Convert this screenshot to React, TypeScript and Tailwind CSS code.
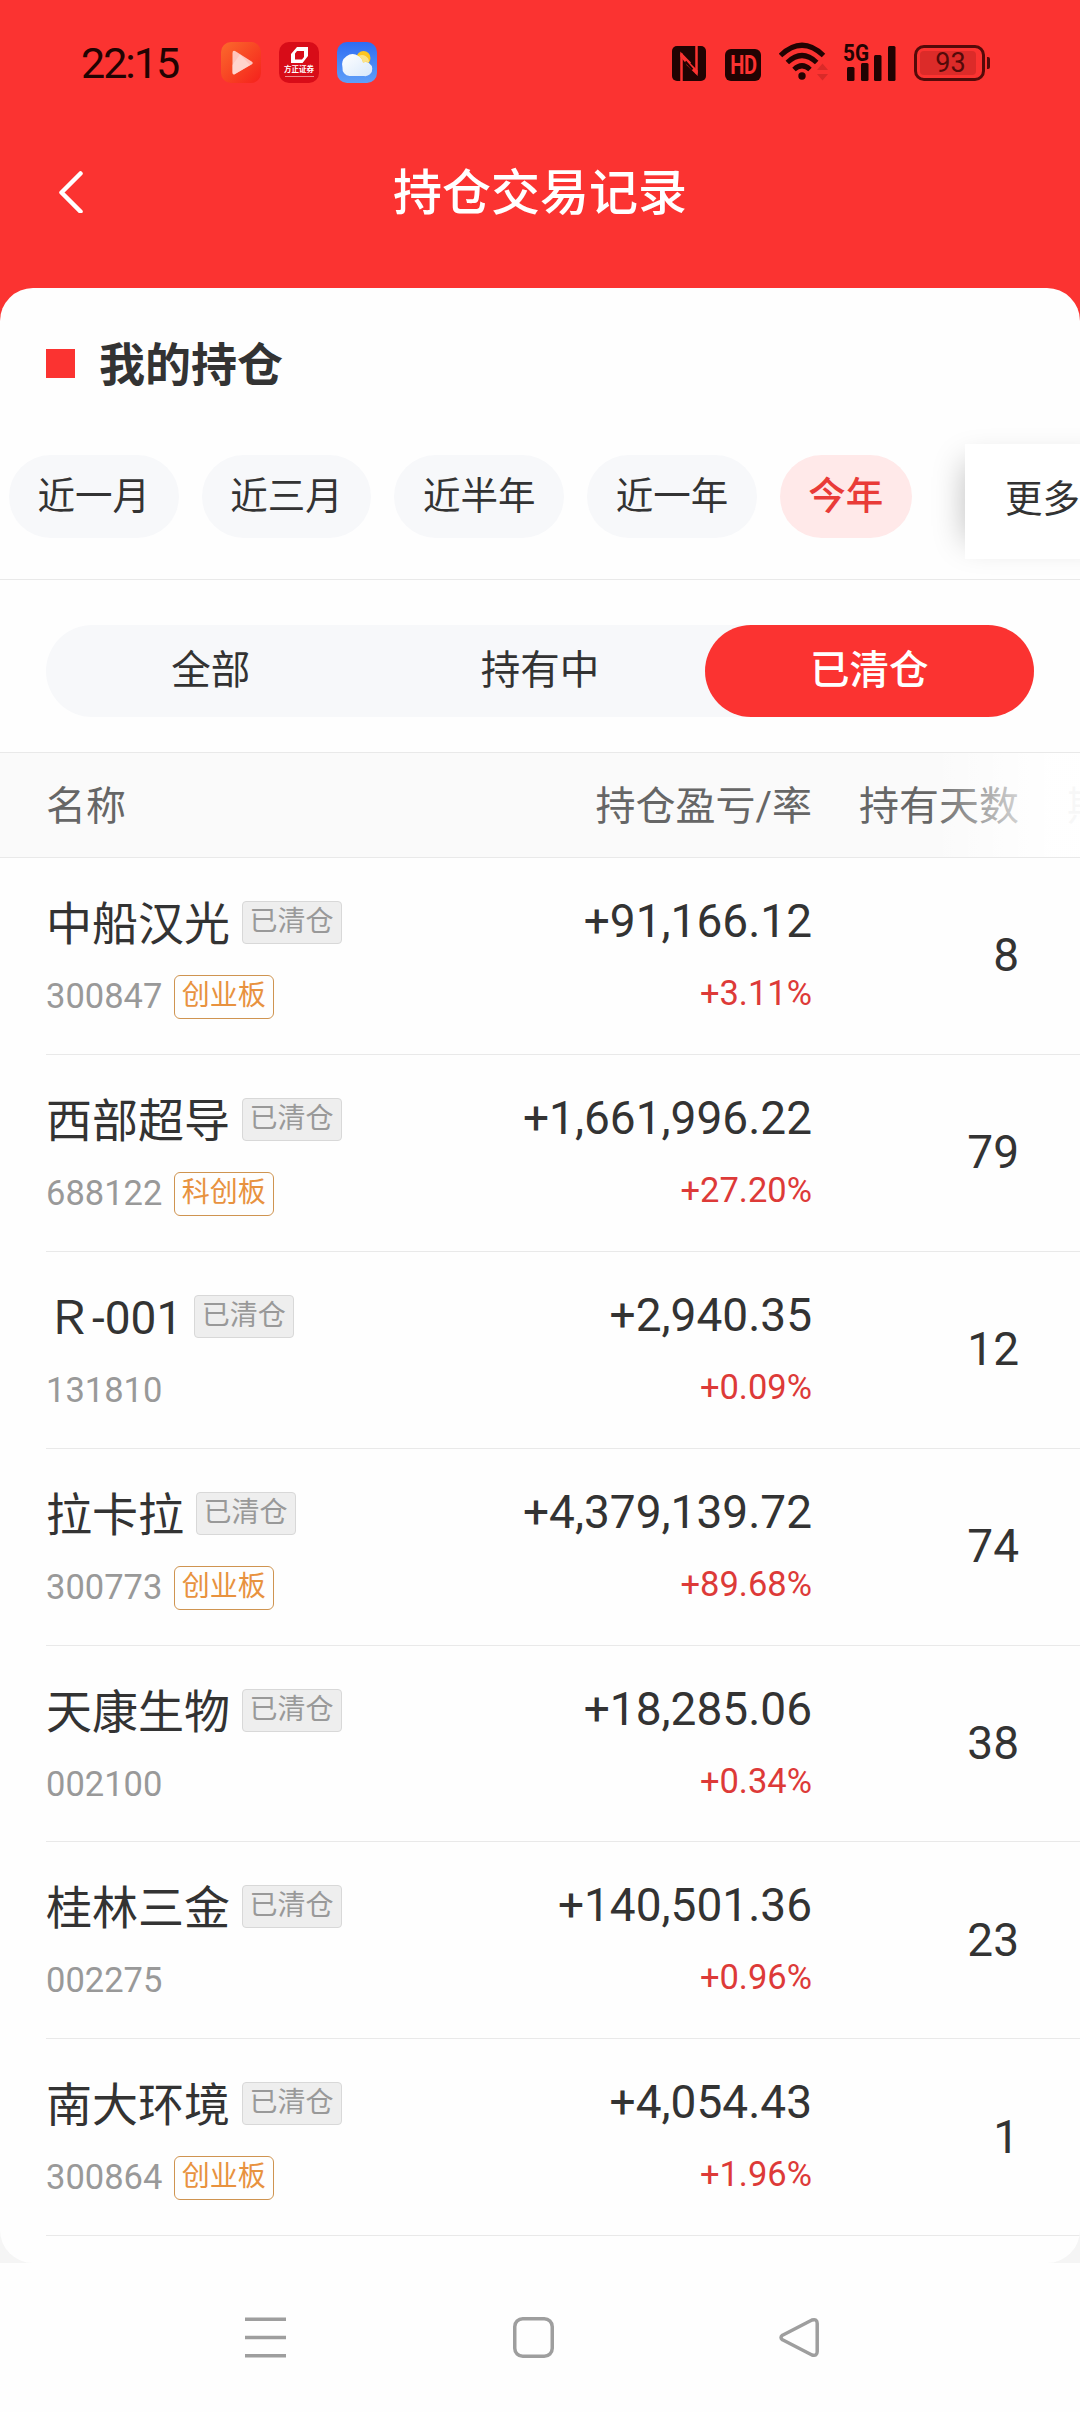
import React from 'react';

interface Holding {
  name: string;
  code: string;
  board?: string;
  profit: string;
  rate: string;
  days: number;
}

const holdings: Holding[] = [
  { name: '中船汉光', code: '300847', board: '创业板', profit: '+91,166.12', rate: '+3.11%', days: 8 },
  { name: '西部超导', code: '688122', board: '科创板', profit: '+1,661,996.22', rate: '+27.20%', days: 79 },
  { name: 'Ｒ-001', code: '131810', profit: '+2,940.35', rate: '+0.09%', days: 12 },
  { name: '拉卡拉', code: '300773', board: '创业板', profit: '+4,379,139.72', rate: '+89.68%', days: 74 },
  { name: '天康生物', code: '002100', profit: '+18,285.06', rate: '+0.34%', days: 38 },
  { name: '桂林三金', code: '002275', profit: '+140,501.36', rate: '+0.96%', days: 23 },
  { name: '南大环境', code: '300864', board: '创业板', profit: '+4,054.43', rate: '+1.96%', days: 1 },
];

const periods = ['近一月', '近三月', '近半年', '近一年', '今年'];
const tabs = ['全部', '持有中', '已清仓'];

const PlayIcon = () => (
  <svg className="w-10 h-[41px]" viewBox="0 0 40 41">
    <defs>
      <linearGradient id="play" x1="0" y1="0" x2="1" y2="1">
        <stop offset="0" stopColor="#fb6a2c" />
        <stop offset="1" stopColor="#f5201c" />
      </linearGradient>
    </defs>
    <rect width="40" height="41" rx="10" fill="url(#play)" />
    <path d="M11.5 11v19.5q0 3 2.6 1.500L31 22.300q1.800-1.300 0-2.600L14.500 9.200q-3-1.200-3 1.800z" fill="#ffc5bd" />
    <path d="M11.500 23l7.500-10.500L29 23 14 32q-2.500 1-2.500-2z" fill="#ffdcd6" opacity=".7" />
  </svg>
);

const BrokerIcon = () => (
  <div className="w-10 h-[41px] rounded-[10px] bg-[#d80c18] flex flex-col items-center pt-[5px]">
    <svg className="w-[17px] h-4 shrink-0" viewBox="0 0 17 16">
      <path fillRule="evenodd" fill="#fff" d="M6 0h11v9l-5.500 7H0V7zM6 4L4 6.500v6h7L13 10V4z" />
    </svg>
    <span className="text-[7.5px] leading-[8px] font-bold text-white mt-[3px] whitespace-nowrap">方正证券</span>
    <div className="w-[29px] h-px bg-[#ee8a8e] mt-[2px]" />
  </div>
);

const WeatherIcon = () => (
  <svg className="w-10 h-[41px]" viewBox="0 0 40 41">
    <defs>
      <linearGradient id="sky" x1="0" y1="0" x2="0" y2="1">
        <stop offset="0" stopColor="#2f6cf3" />
        <stop offset="1" stopColor="#5f9ff8" />
      </linearGradient>
      <linearGradient id="cloud" x1="0" y1="0" x2="1" y2="1">
        <stop offset="0" stopColor="#ffffff" />
        <stop offset="1" stopColor="#d8e8fb" />
      </linearGradient>
    </defs>
    <rect width="40" height="41" rx="10" fill="url(#sky)" />
    <circle cx="26.500" cy="16" r="7" fill="#fdc51f" />
    <path d="M12.500 34a7.500 7.500 0 0 1-7-8.500 10.500 10.500 0 0 1 16-11.500 9 9 0 0 1 4.500 6.500A7 7 0 1 1 27 34z" fill="url(#cloud)" />
    <path d="M21.500 14a9 9 0 0 1 4.500 6.500 7 7 0 0 1 6-.3 7 7 0 0 0-10.500-6.200z" fill="#fbe388" />
  </svg>
);

const NfcIcon = () => (
  <svg className="w-[34px] h-[35px]" viewBox="0 0 34 35">
    <rect width="34" height="35" rx="5" fill="#210302" />
    <path d="M9.500 35V7.500M24.500 27.500V0" fill="none" stroke="#fb3331" strokeWidth="2.500" />
    <path d="M8.300 5.500L19 16.500l-2.500 4L8.300 10.500z M25.700 30L14.500 19v-5.500L25.700 24.500z" fill="#fb3331" />
    <path d="M13.500 15.500l7 8" stroke="#210302" strokeWidth="2" />
  </svg>
);

const HdIcon = () => (
  <div className="w-9 h-8 rounded-[6px] bg-[#210302] flex items-center justify-center">
    <span className="text-[25px] leading-none font-bold text-[#fb3331] tracking-[-0.5px] scale-x-[0.8]">HD</span>
  </div>
);

const WifiIcon = () => (
  <svg className="w-[50px] h-[39px]" viewBox="0 0 50 39" fill="none">
    <g stroke="#210302" strokeWidth="5">
      <path d="M1.500 13.500Q23 -7 44.500 13.500" />
      <path d="M8.300 20.500Q23 6.500 37.700 20.500" />
      <path d="M15 27.500Q23 20 31 27.500" />
    </g>
    <circle cx="23" cy="34" r="3.700" fill="#210302" />
    <path d="M38 28l5.500-6.500L49 28zM38 32h11l-5.500 6.500z" fill="#d92a28" />
  </svg>
);

const SignalIcon = () => (
  <svg className="w-[53px] h-[38px] overflow-visible" viewBox="0 0 53 38" fill="#210302">
    <text x="-1" y="17.500" textLength="26" lengthAdjust="spacingAndGlyphs" className="text-[24px] font-bold">5G</text>
    <rect x="3" y="24" width="7.500" height="14" rx="1.500" />
    <rect x="17" y="20" width="7.500" height="18" rx="1.500" />
    <rect x="30" y="12" width="7.500" height="26" rx="1.500" />
    <rect x="44" y="3" width="7.500" height="35" rx="1.500" />
  </svg>
);

const BatteryIcon = () => (
  <div className="flex items-center gap-[2px]">
    <div className="w-[71px] h-9 rounded-[10px] border-[3px] border-[#540a09] p-[3px]">
      <div className="w-[56px] h-full rounded-[4px] bg-[#dc2b29] flex items-center justify-center pl-[5px]">
        <span className="text-[27px] leading-none text-[#540a09]">93</span>
      </div>
    </div>
    <div className="w-[3px] h-3 rounded-r-[2px] bg-[#540a09]" />
  </div>
);

const StatusBar = () => (
  <div className="h-[125px] flex items-center pl-[81px] pr-[90px]">
    <span className="w-[139px] pt-px text-[43px] leading-none tracking-[-2px] text-[#210302]">22:15</span>
    <div className="flex items-center gap-[18px] pb-px ml-px">
      <PlayIcon />
      <BrokerIcon />
      <WeatherIcon />
    </div>
    <div className="ml-auto flex items-end pb-[2px]">
      <NfcIcon />
      <div className="ml-[19px]"><HdIcon /></div>
      <div className="ml-[18px]"><WifiIcon /></div>
      <div className="ml-[15px]"><SignalIcon /></div>
      <div className="ml-[17px]"><BatteryIcon /></div>
    </div>
  </div>
);

const HoldingRow = ({ item }: { item: Holding }) => (
  <div className="ml-[46px] h-[196.9px] flex border-b border-[#e9e9e9] text-[#333333]">
    <div className="flex-1 pt-[38px]">
      <div className="flex items-center h-[56px]">
        <span className="text-[46px] leading-[56px] whitespace-nowrap">{item.name}</span>
        <span className="ml-[12px] mb-[3px] w-[100px] h-[43px] rounded-[4px] border border-[#d8d8d8] bg-[#eeeeee] flex justify-center pr-px text-[28px] leading-[39px] text-[#999999]">
          已清仓
        </span>
      </div>
      <div className="flex items-center h-[44px] mt-[22px]">
        <span className="text-[34.5px] leading-[44px] text-[#999999]">{item.code}</span>
        {item.board && (
          <span className="relative top-px ml-[12px] w-[100px] h-[44px] rounded-[6px] border border-[#cf9450] flex justify-center pr-px text-[28px] leading-[40px] text-[#e8923f]">
            {item.board}
          </span>
        )}
      </div>
    </div>
    <div className="w-[320px] pt-[36px] text-right">
      <div className="text-[46px] leading-[54px]">{item.profit}</div>
      <div className="text-[34.5px] leading-[40px] mt-[25px] text-[#dd3a38]">{item.rate}</div>
    </div>
    <div className="w-[268px] pr-[61px] flex items-center justify-end text-[46px]">{item.days}</div>
  </div>
);

const App: React.FC = () => {
  const activePeriod = '今年';
  const activeTab = '已清仓';

  return (
    <div
      lang="zh-CN"
      className="w-[1080px] h-[2412px] overflow-hidden flex flex-col bg-[#fefefe] font-['Roboto','Noto_Sans_CJK_SC',sans-serif]"
    >
      {/* Red header */}
      <header className="h-[322px] shrink-0 bg-[#fb3331]">
        <StatusBar />
        <div className="h-[134px] grid grid-cols-[1fr_auto_1fr] items-center">
          <svg className="ml-[58px] w-[26px] h-[42px]" viewBox="0 0 26 42" fill="none" stroke="#fff" strokeWidth="4.500" strokeLinecap="round" strokeLinejoin="round">
            <path d="M22.500 2.500L3.500 21.500l19 19" />
          </svg>
          <h1 className="pt-[2px] text-[49px] leading-none font-medium text-white">持仓交易记录</h1>
        </div>
      </header>

      <div className="h-[1975px] -mt-[34px] shrink-0 bg-[linear-gradient(#fb3331_50%,#f5f5f5_50%)]">
        <main className="h-full rounded-[33px] bg-[#fefefe] overflow-hidden">
          <div className="flex items-center h-[154px] pl-[46px] gap-[24px]">
            <div className="w-[29px] h-[29px] bg-[#fb3331] mb-[3px]" />
            <h2 className="text-[46px] leading-none font-bold text-[#333333]">我的持仓</h2>
          </div>

          {/* Period filter */}
          <div className="flex h-[138px] border-b border-[#e9e9e9]">
            <div className="w-[965px] shrink-0 flex gap-[23px] pl-[9px] pt-[13px]">
              {periods.map((p) => (
                <button
                  key={p}
                  className={`h-[83px] px-[28.6px] rounded-[42px] shrink-0 text-[37.5px] leading-none ${
                    p === activePeriod ? 'bg-[#ffe9e9] text-[#e93b38] font-medium' : 'bg-[#f7f8fa] text-[#333333]'
                  }`}
                >
                  {p}
                </button>
              ))}
            </div>
            <div className="w-[180px] h-[115px] mt-[2px] shrink-0 bg-white shadow-[-18px_0_32px_-18px_rgba(0,0,0,0.26)] flex items-center pl-[40px] pb-[3px] text-[37.5px] leading-none text-[#333333] whitespace-nowrap">
              更多
            </div>
          </div>

          {/* Status tabs */}
          <div className="h-[172px] pt-[45px] px-[46px]">
            <div className="h-[92px] rounded-full bg-[#f7f8fa] flex">
              {tabs.map((t) => (
                <button
                  key={t}
                  className={`flex-1 rounded-full text-[39.5px] leading-none ${
                    t === activeTab ? 'bg-[#fb3331] text-white font-medium' : 'text-[#333333]'
                  }`}
                >
                  {t}
                </button>
              ))}
            </div>
          </div>

          <div className="relative h-[106px] border-y border-[#e9e9e9] bg-[#fafafa] flex items-center pl-[46px] pt-[4px] text-[40px] leading-none text-[#666666] whitespace-nowrap overflow-hidden">
            <span className="flex-1">名称</span>
            <span className="w-[320px] text-right">持仓盈亏/率</span>
            <span className="w-[207px] text-right">持有天数</span>
            <span className="w-[61px] pl-[48px]">期</span>
            <div className="absolute inset-y-0 right-0 w-[150px] bg-linear-to-r from-white/0 to-white/95 to-80%" />
          </div>

          {holdings.map((item) => (
            <HoldingRow key={item.code} item={item} />
          ))}
        </main>
      </div>

      {/* System navigation */}
      <nav className="flex-1 flex items-start pt-[53px]">
        <svg className="ml-[244px] w-[43px] h-[43px]" viewBox="0 0 43 43" stroke="#9e9e9e" strokeWidth="3.500">
          <path d="M1 3.200h41M1 21.500h41M1 39.800h41" />
        </svg>
        <svg className="ml-[225px] w-[43px] h-[43px]" viewBox="0 0 43 43" fill="none" stroke="#9e9e9e" strokeWidth="3.500">
          <rect x="2.750" y="2.750" width="37.500" height="37.500" rx="8" />
        </svg>
        <svg className="ml-[223px] w-[43px] h-[43px]" viewBox="0 0 43 43" fill="none" stroke="#9e9e9e" strokeWidth="3.500" strokeLinejoin="round">
          <path d="M34 4L4.500 19.200Q1.500 21.500 4.500 23.800L34 39q5.200 1.500 5.200-3.500v-28Q39.200 2.500 34 4z" />
        </svg>
      </nav>
    </div>
  );
};

export default App;
